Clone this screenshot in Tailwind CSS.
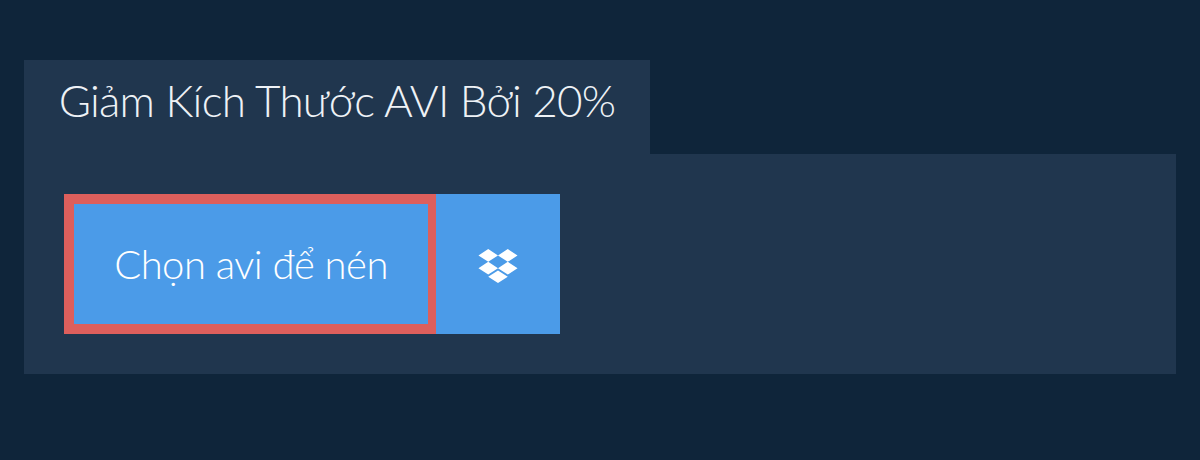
<!DOCTYPE html>
<html lang="vi">
<head>
<meta charset="utf-8">
<script src="https://cdn.jsdelivr.net/npm/@tailwindcss/browser@4"></script>
</head>
<body class="m-0 h-[460px] w-[1200px] overflow-hidden bg-[#0f253a] font-['Lato',sans-serif]">
<div class="px-6 pt-[60px]">
  <h1 class="flex h-[94px] w-[626px] items-start justify-center bg-[#20364e] pt-3 text-[44px] leading-[56px] font-light tracking-[-0.74px] text-[#eef2f6]">Giảm Kích Thước AVI Bởi 20%</h1>
  <div class="flex h-[220px] items-start bg-[#20364e] p-10">
    <button class="flex h-[140px] w-[372px] items-center justify-center border-[10px] border-r-8 border-[#dd5f5c] bg-[#4b9be8] text-[40px] font-light tracking-[-0.53px] text-white">Chọn avi để nén</button>
    <div class="flex h-[140px] w-[124px] items-center justify-center bg-[#4b9be8]">
      <svg class="mt-1 h-[34px] w-[40px]" viewBox="0 1 40 34.800" fill="#fff">
        <path d="M10 1 0 7.6l10 6.5 10-6.5zM30 1 20 7.6l10 6.5 10-6.5zM0 20.700l10 6.500 10-6.500-10-6.600zM30 14.100l-10 6.600 10 6.500 10-6.500zM10 29.300 20 35.800l10-6.500-10-6.400z"/>
      </svg>
    </div>
  </div>
</div>
</body>
</html>
